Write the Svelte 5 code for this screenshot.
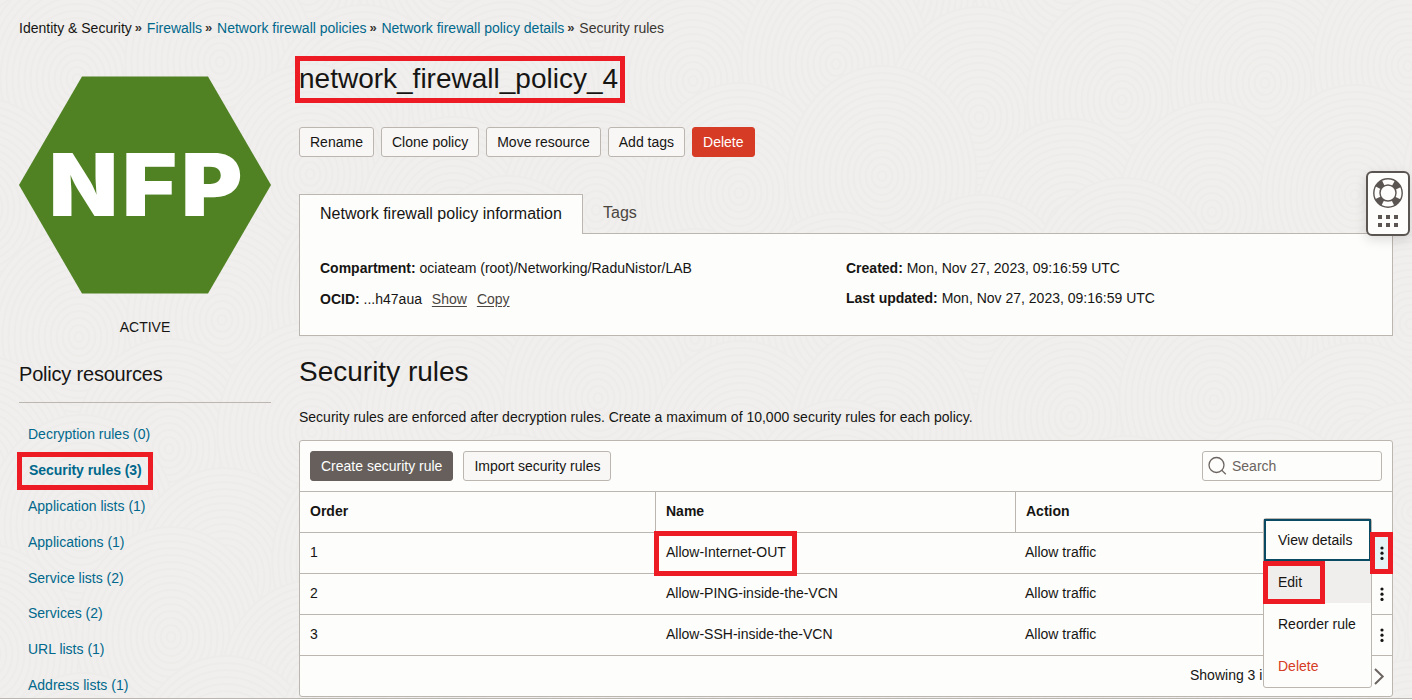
<script>
  const crumbs = ['Firewalls', 'Network firewall policies', 'Network firewall policy details'];
  const resources = [
    'Decryption rules (0)', 'Security rules (3)', 'Application lists (1)', 'Applications (1)',
    'Service lists (2)', 'Services (2)', 'URL lists (1)', 'Address lists (1)'
  ];
  const actions = ['Rename', 'Clone policy', 'Move resource', 'Add tags'];
  const rules = [
    { order: 1, name: 'Allow-Internet-OUT', action: 'Allow traffic' },
    { order: 2, name: 'Allow-PING-inside-the-VCN', action: 'Allow traffic' },
    { order: 3, name: 'Allow-SSH-inside-the-VCN', action: 'Allow traffic' }
  ];
  const menu = ['View details', 'Edit', 'Reorder rule', 'Delete'];

  // Overlapping discs of concentric rings form the page texture.
  const discs = [];
  for (let row = 0; row < 8; row++) {
    for (let col = 0; col < 11; col++) {
      discs.push({
        x: col * 150 + (row % 2) * 76 + ((col * 37 + row * 23) % 44) - 22,
        y: row * 112 + ((col * 53 + row * 17) % 70) - 50
      });
    }
  }
  const radii = Array.from({ length: 16 }, (_, i) => 110 - i * 7);
</script>

<div class="page">
  <svg class="texture" width="1412" height="698" aria-hidden="true">
    {#each discs as d}
      {#each radii as r}
        <ellipse cx={d.x} cy={d.y} rx={r * 0.86} ry={r} />
      {/each}
    {/each}
  </svg>

  <nav class="crumbs">
    <span>Identity &amp; Security</span><i>»</i>
    {#each crumbs as c}<a href="#top">{c}</a><i>»</i>{/each}
    <span class="here">Security rules</span>
  </nav>

  <div class="columns">
    <aside>
      <svg class="hex" width="252" height="218" viewBox="0 0 252 218">
        <path d="M0 109 63 .5H189L252 109 189 217.5H63Z" fill="#508223" />
        <text y="140"><tspan x="30" textLength="69" lengthAdjust="spacingAndGlyphs">N</tspan><tspan x="103" textLength="55" lengthAdjust="spacingAndGlyphs">F</tspan><tspan x="162" textLength="61.5" lengthAdjust="spacingAndGlyphs">P</tspan></text>
      </svg>
      <div class="state">ACTIVE</div>
      <h2>Policy resources</h2>
      <ul>
        {#each resources as r, i}
          <li class:current={i === 1}><a href="#top">{r}</a>{#if i === 1}<b class="mark"></b>{/if}</li>
        {/each}
      </ul>
    </aside>

    <main>
      <h1>network_firewall_policy_4<b class="mark"></b></h1>
      <div class="actions">
        {#each actions as a}<button>{a}</button>{/each}
        <button class="danger">Delete</button>
      </div>

      <div class="tabs">
        <div class="tab on">Network firewall policy information</div>
        <div class="tab">Tags</div>
      </div>
      <section class="info">
        <div>
          <p><strong>Compartment:</strong> ociateam (root)/Networking/RaduNistor/LAB</p>
          <p class="ocid"><strong>OCID:</strong> ...h47aua <a href="#top">Show</a><a href="#top">Copy</a></p>
        </div>
        <div>
          <p><strong>Created:</strong> Mon, Nov 27, 2023, 09:16:59 UTC</p>
          <p><strong>Last updated:</strong> Mon, Nov 27, 2023, 09:16:59 UTC</p>
        </div>
      </section>

      <h3>Security rules</h3>
      <p class="desc">Security rules are enforced after decryption rules. Create a maximum of 10,000 security rules for each policy.</p>

      <section class="card">
        <div class="toolbar">
          <button class="primary">Create security rule</button>
          <button>Import security rules</button>
          <div class="search">
            <svg width="20" height="20" viewBox="0 0 20 20" fill="none" stroke="#6b6460" stroke-width="1.3">
              <circle cx="8.5" cy="9" r="7.5" /><path d="m13.6 14.1 4.2 4.2" />
            </svg>
            <span>Search</span>
          </div>
        </div>
        <div class="row head"><span>Order</span><span>Name</span><span>Action</span></div>
        {#each rules as r, i}
          <div class="row">
            <span>{r.order}</span>
            <span class="name">{r.name}{#if i === 0}<b class="mark"></b>{/if}</span>
            <span>{r.action}</span>
            <span class="more" class:open={i === 0}>
              <svg width="5" height="16" viewBox="0 0 5 16" fill="#161513">
                <circle cx="3" cy="3" r="1.6" /><circle cx="3" cy="8.2" r="1.6" /><circle cx="3" cy="13.4" r="1.6" />
              </svg>
              {#if i === 0}<b class="mark"></b>{/if}
            </span>
          </div>
        {/each}
        <div class="foot">
          <span>Showing 3 i</span>
          <svg width="12" height="18" viewBox="0 0 12 18" fill="none" stroke="#6b6460" stroke-width="2"><path d="m2 2 7.7 7.5L2 17" /></svg>
        </div>
        <div class="menu">
          {#each menu as m, i}
            <div class="item" class:focus={i === 0} class:hover={i === 1} class:del={i === 3}>{m}{#if i === 1}<b class="mark"></b>{/if}</div>
          {/each}
        </div>
      </section>
    </main>
  </div>

  <div class="help">
    <svg width="40" height="61" viewBox="0 0 40 61">
      <circle cx="20" cy="20" r="11.2" fill="none" stroke="#5b5551" stroke-width="6.4" stroke-dasharray="7 10.593" stroke-dashoffset="-5.3" />
      <circle cx="20" cy="20" r="14.2" fill="none" stroke="#5b5551" stroke-width="1.4" />
      <circle cx="20" cy="20" r="8" fill="none" stroke="#5b5551" stroke-width="1.4" />
      {#each [42, 50] as y}{#each [10, 18, 26] as x}<rect {x} {y} width="4" height="4" fill="#5b5551" />{/each}{/each}
    </svg>
  </div>
</div>

<style>
  :global(body) { margin: 0; overflow: hidden; }
  .page {
    position: relative; box-sizing: border-box; width: 1412px; height: 699px; overflow: hidden;
    background: #f0efed; border-bottom: 1px solid #bcb6b1; color: #161513;
    font: 14px/20px "Liberation Sans", Arial, sans-serif;
  }
  .texture { position: absolute; left: 0; top: 0; }
  .texture ellipse { fill: #f0efed; stroke: #edecea; stroke-width: 2; }
  .crumbs { position: relative; display: flex; padding: 18px 19px 0; white-space: nowrap; }
  .crumbs i { font-style: normal; font-size: 13px; font-weight: bold; color: #3a3632; margin: 0 5px 0 3px; width: 7px; }
  .crumbs .here { color: #3a3632; }
  a { color: #00688c; text-decoration: none; }
  .columns { position: relative; display: flex; gap: 28px; padding-left: 19px; }
  aside { width: 252px; flex: none; padding-top: 38px; }
  .hex { display: block; }
  .hex text { font: 900 86.6px Inter, sans-serif; fill: #fff; }
  .state { text-align: center; margin-top: 23px; }
  h1, h2, h3, p, ul { margin: 0; padding: 0; font-weight: normal; }
  h2 { font-size: 20px; line-height: 28px; letter-spacing: -0.2px; margin-top: 23px; padding-bottom: 14px; border-bottom: 1px solid #bcb6b1; }
  ul { list-style: none; padding: 14px 0 0 9px; }
  li { position: relative; height: 35.9px; line-height: 35.9px; }
  li.current { font-weight: bold; padding-left: 1px; letter-spacing: -0.05px; }
  .mark { position: absolute; box-sizing: border-box; border: 5px solid #ed1c24; }
  li .mark { left: -11px; top: -1px; width: 136px; height: 38px; }
  main { width: 1094px; flex: none; }
  h1 { position: relative; font-size: 28px; line-height: 36px; margin-top: 23px; }
  h1 .mark { left: -4px; top: -5px; width: 330px; height: 47px; }
  .actions { display: flex; gap: 7px; margin-top: 30px; }
  button {
    box-sizing: border-box; height: 30px; padding: 0 10px; border: 1px solid #bcb6b1; border-radius: 3px;
    background: #f8f7f6; color: #161513; font: inherit; line-height: 28px; white-space: nowrap;
  }
  button.danger { background: #d63b25; border-color: #d63b25; color: #fff; }
  button.primary { background: #665f5b; border-color: #665f5b; color: #fff; }
  .tabs { display: flex; margin-top: 37px; font-size: 16px; position: relative; z-index: 1; }
  .tab { box-sizing: border-box; height: 39px; padding: 9px 20px; color: #4a4541; }
  .tab.on { border: 1px solid #bcb6b1; border-bottom: 0; background: #fdfdfb; height: 40px; margin-bottom: -1px; color: #161513; width: 284px; white-space: nowrap; }
  .info {
    box-sizing: border-box; height: 103px; border: 1px solid #bcb6b1; background: #fdfdfb;
    display: grid; grid-template-columns: 526px 1fr; padding: 24px 20px;
  }
  .info p { margin-bottom: 10px; }
  .info .ocid { margin-top: 11px; }
  .info a { color: #4a4541; text-decoration: underline; text-underline-offset: 2px; margin: 0 4px 0 6px; }
  h3 { font-size: 28px; line-height: 36px; margin-top: 18px; }
  .desc { margin-top: 17px; }
  .card {
    position: relative; box-sizing: border-box; height: 257px; margin-top: 13px;
    border: 1px solid #bcb6b1; border-radius: 3px; background: #fdfdfb;
  }
  .toolbar { display: flex; gap: 10px; padding: 10px; height: 30px; }
  .search {
    box-sizing: border-box; display: flex; align-items: center; width: 180px; height: 30px; margin-left: auto;
    border: 1px solid #bcb6b1; border-radius: 3px; padding-left: 5px; gap: 4px; color: #6b6460;
  }
  .row { box-sizing: border-box; display: grid; grid-template-columns: 355px 360px 1fr 21px; height: 41px; border-top: 1px solid #bcb6b1; line-height: 39px; }
  .row span { padding-left: 10px; }
  .head { font-weight: bold; }
  .head span + span { border-left: 1px solid #bcb6b1; }
  .name { position: relative; }
  .row .name { padding-left: 11px; }
  .name .mark { left: -1px; top: -2px; width: 143px; height: 45px; }
  .row .more { position: relative; display: flex; align-items: center; justify-content: center; padding: 0; }
  .more.open { background: #e5f2f6; z-index: 2; }
  .more .mark { left: -1px; top: -1px; width: 23px; height: 42px; }
  .foot { display: flex; justify-content: space-between; align-items: center; height: 40px; border-top: 1px solid #bcb6b1; padding: 0 7px 0 890px; }
  .foot span { line-height: 38px; margin-top: -2px; }
  .menu {
    position: absolute; left: 963px; top: 77px; box-sizing: border-box; width: 109px; height: 170px;
    background: #fdfdfb; border: 1px solid #bcb6b1; border-radius: 3px;
  }
  .item { position: relative; box-sizing: border-box; height: 42px; line-height: 42px; padding-left: 14px; white-space: nowrap; }
  .item.focus { border: 2px solid #0a4a62; padding-left: 12px; line-height: 38px; }
  .item.hover { background: #f0eeed; }
  .item.del { color: #d63b25; }
  .item .mark { left: -1px; top: 0; width: 62px; height: 43px; }
  .help {
    position: absolute; left: 1366px; top: 171px; box-sizing: border-box; width: 44px; height: 65px; z-index: 2;
    border: 2px solid #5b5551; border-radius: 6px; background: #fdfdfb; box-shadow: 0 4px 12px rgba(0,0,0,.13);
  }
</style>
